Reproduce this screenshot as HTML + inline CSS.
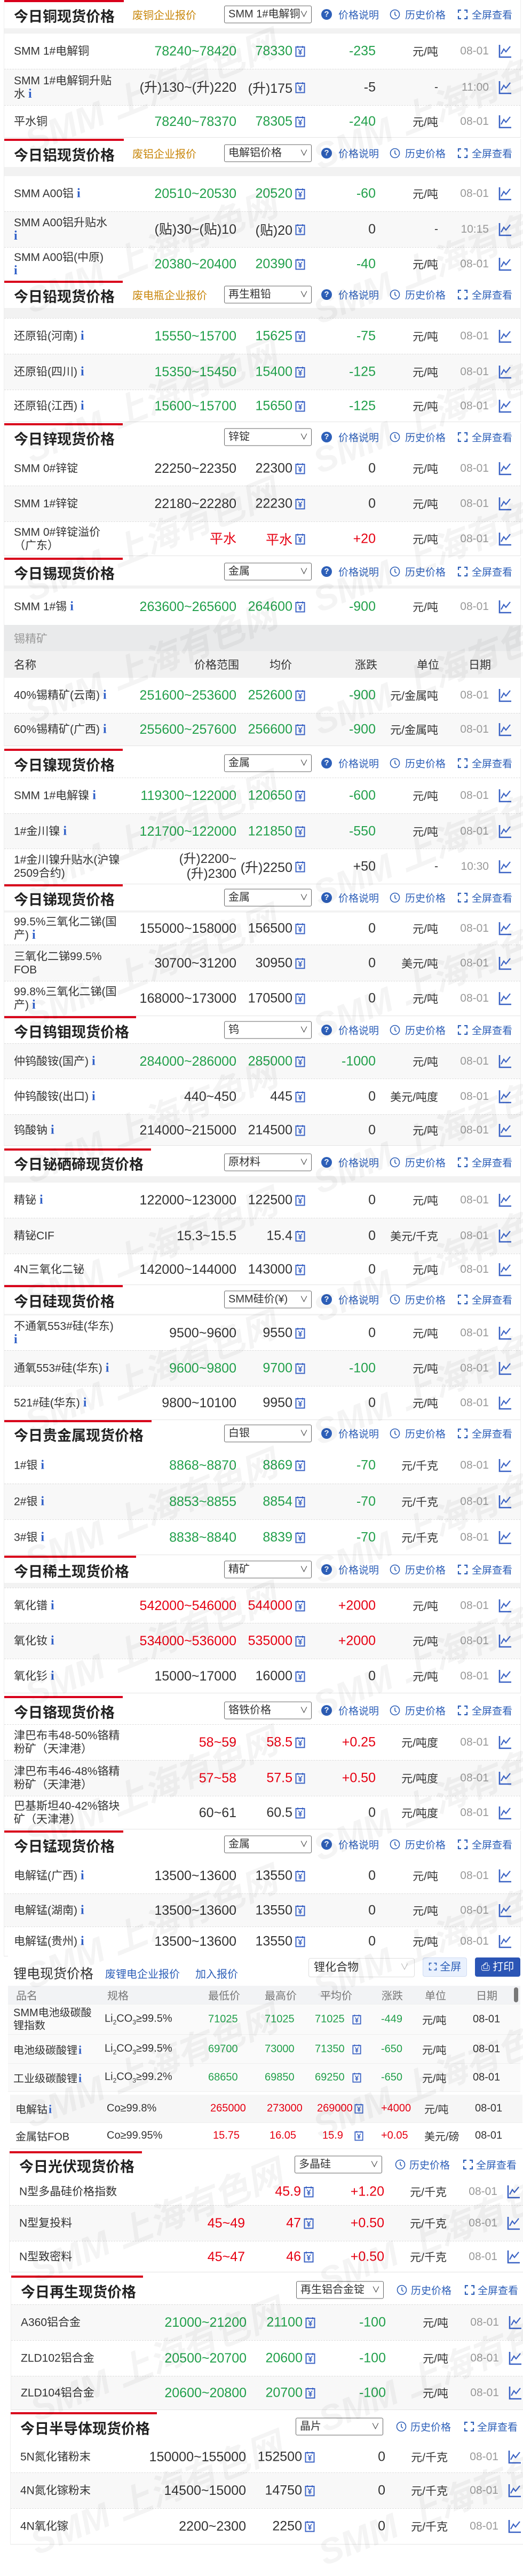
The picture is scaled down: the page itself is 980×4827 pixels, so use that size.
<!DOCTYPE html>
<html><head><meta charset="utf-8">
<style>
*{box-sizing:border-box}
body{margin:0;width:980px;height:4772px;position:relative;overflow:hidden;background:#fff;font-family:"Liberation Sans","Noto Sans CJK SC",sans-serif;color:#333}
.s{position:absolute;left:7px;width:969px;background:#fff;border-left:1px solid #eee;border-right:1px solid #eee;border-bottom:1px solid #e4e4e4}
.s.lo{left:17px;width:975px}
.rb{position:absolute;left:0;top:0;height:4px;background:#d9001b;z-index:2}
.h{position:relative;background:#fff}
.h>*{position:absolute;top:50%;transform:translateY(-50%);white-space:nowrap}
.t{left:18px;font-size:27px;font-weight:bold;color:#222;margin-top:2px}
.o{left:240px;font-size:20px;color:#c8860a}
.sel{left:412px;width:164px;height:33px;border:1px solid #666;border-radius:3px;font-size:20px;line-height:31px;padding-left:7px;color:#333;overflow:hidden;background:#fff}
.lo .sel{left:534px}
.sel b{position:absolute;right:6px;top:0;font-weight:normal;font-size:15px;color:#333}
.lk{font-size:19px;color:#2d5fb8}
.qi{left:594px;width:20px;height:20px;border-radius:50%;background:#2d5fb8;color:#fff;font-size:15px;font-weight:bold;text-align:center;line-height:20px}
.ck{left:722px;width:20px;height:20px}
.fs{left:849px;width:20px;height:20px}
.band{background:#f2f2f2}
.r{position:relative;border-top:1px dashed #ddd;background:#fff}
.r.a{background:#f8f8f8}
.r>*{position:absolute;top:50%;transform:translateY(-50%);white-space:nowrap}
.n{left:18px;font-size:21px;line-height:25px;color:#333}
.i{font-family:"Liberation Serif",serif;font-weight:bold;color:#3060c8;font-size:24px;margin-left:6px}
.rg{right:532px;font-size:25px;text-align:right;line-height:28px}
.av{right:427px;font-size:25px}
.y{right:403px;width:19px;height:22px}
.ch{right:271px;font-size:25px}
.u{right:154px;font-size:21px}
.d{right:59px;font-size:21px;color:#999}
.c{right:16px;width:25px;height:26px}
.g{color:#22a04b}.rd{color:#e60012}.k{color:#333}
.sub{background:#e9eaeb;position:relative;color:#999;font-size:21px}
.colh{background:#f1f1f1;position:relative;font-size:21px;color:#333}
.sub span,.colh span{position:absolute;top:50%;transform:translateY(-50%)}
.wm{position:absolute;font-size:66px;font-weight:bold;font-style:italic;color:rgba(0,0,0,0.045);transform:rotate(-22deg);white-space:nowrap;z-index:5;pointer-events:none}
.li{position:absolute;left:15px;top:3665px;width:960px;height:362px;background:#fff}
.li .lt{position:absolute;left:10px;top:14px;font-size:25px;color:#333}
.li .bl{position:absolute;top:18px;font-size:20px;color:#2d5fb8}
.lr{position:absolute;left:0;width:960px;border-bottom:1px solid #eee;background:#fafafa;font-size:20px}
.lr>*{position:absolute;top:50%;transform:translateY(-50%);white-space:nowrap}
</style></head><body>
<svg width="0" height="0" style="position:absolute">
<defs>
<symbol id="yen" viewBox="0 0 19 22"><rect x="1.5" y="3" width="16" height="17.5" fill="none" stroke="#3a62c4" stroke-width="2"/><path d="M5 1v4M14 1v4M6 7l3.5 4.5L13 7M9.5 11.5V18M6.5 12.5h6M6.5 15h6" fill="none" stroke="#3a62c4" stroke-width="1.6"/></symbol>
<symbol id="cht" viewBox="0 0 25 26"><path d="M2 1V24H24" fill="none" stroke="#3a62c4" stroke-width="2.6"/><path d="M5 18L10 9L14 14L22 4" fill="none" stroke="#3a62c4" stroke-width="2.2"/></symbol>
<symbol id="clk" viewBox="0 0 20 20"><circle cx="10" cy="10" r="8.5" fill="none" stroke="#2d5fb8" stroke-width="1.6"/><path d="M10 5v5.5l3 2.5" fill="none" stroke="#2d5fb8" stroke-width="1.6"/></symbol>
<symbol id="ful" viewBox="0 0 20 20"><path d="M2 7V2h5M13 2h5v5M18 13v5h-5M7 18H2v-5" fill="none" stroke="#2d5fb8" stroke-width="2.2"/></symbol>
</defs></svg>

<!-- 1 copper -->
<div class="s" style="top:0"><div class="rb" style="width:224px"></div>
<div class="h" style="height:53px"><span class="t">今日铜现货价格</span><span class="o">废铜企业报价</span><span class="sel">SMM 1#电解铜<b>∨</b></span><span class="qi">?</span><span class="lk" style="left:626px">价格说明</span><svg class="ck"><use href="#clk"/></svg><span class="lk" style="left:751px">历史价格</span><svg class="fs"><use href="#ful"/></svg><span class="lk" style="left:876px">全屏查看</span></div>
<div class="band" style="height:10px"></div>
<div class="r" style="height:66px;border-top:0"><span class="n">SMM 1#电解铜</span><span class="rg g">78240~78420</span><span class="av g">78330</span><svg class="y"><use href="#yen"/></svg><span class="ch g">-235</span><span class="u">元/吨</span><span class="d">08-01</span><svg class="c"><use href="#cht"/></svg></div>
<div class="r a" style="height:68px"><span class="n">SMM 1#电解铜升贴<br>水<span class="i">i</span></span><span class="rg k">(升)130~(升)220</span><span class="av k">(升)175</span><svg class="y"><use href="#yen"/></svg><span class="ch k">-5</span><span class="u">-</span><span class="d">11:00</span><svg class="c"><use href="#cht"/></svg></div>
<div class="r" style="height:60px"><span class="n">平水铜</span><span class="rg g">78240~78370</span><span class="av g">78305</span><svg class="y"><use href="#yen"/></svg><span class="ch g">-240</span><span class="u">元/吨</span><span class="d">08-01</span><svg class="c"><use href="#cht"/></svg></div>
</div>

<!-- 2 aluminium -->
<div class="s" style="top:260px"><div class="rb" style="width:224px"></div>
<div class="h" style="height:53px"><span class="t">今日铝现货价格</span><span class="o">废铝企业报价</span><span class="sel">电解铝价格<b>∨</b></span><span class="qi">?</span><span class="lk" style="left:626px">价格说明</span><svg class="ck"><use href="#clk"/></svg><span class="lk" style="left:751px">历史价格</span><svg class="fs"><use href="#ful"/></svg><span class="lk" style="left:876px">全屏查看</span></div>
<div class="band" style="height:17px"></div>
<div class="r" style="height:66px;border-top:0"><span class="n">SMM A00铝<span class="i">i</span></span><span class="rg g">20510~20530</span><span class="av g">20520</span><svg class="y"><use href="#yen"/></svg><span class="ch g">-60</span><span class="u">元/吨</span><span class="d">08-01</span><svg class="c"><use href="#cht"/></svg></div>
<div class="r a" style="height:67px"><span class="n">SMM A00铝升贴水<br><span class="i" style="margin:0">i</span></span><span class="rg k">(贴)30~(贴)10</span><span class="av k">(贴)20</span><svg class="y"><use href="#yen"/></svg><span class="ch k">0</span><span class="u">-</span><span class="d">10:15</span><svg class="c"><use href="#cht"/></svg></div>
<div class="r" style="height:63px"><span class="n">SMM A00铝(中原)<br><span class="i" style="margin:0">i</span></span><span class="rg g">20380~20400</span><span class="av g">20390</span><svg class="y"><use href="#yen"/></svg><span class="ch g">-40</span><span class="u">元/吨</span><span class="d">08-01</span><svg class="c"><use href="#cht"/></svg></div>
</div>

<!-- 3 lead -->
<div class="s" style="top:526px"><div class="rb" style="width:222px"></div>
<div class="h" style="height:51px"><span class="t">今日铅现货价格</span><span class="o">废电瓶企业报价</span><span class="sel">再生粗铅<b>∨</b></span><span class="qi">?</span><span class="lk" style="left:626px">价格说明</span><svg class="ck"><use href="#clk"/></svg><span class="lk" style="left:751px">历史价格</span><svg class="fs"><use href="#ful"/></svg><span class="lk" style="left:876px">全屏查看</span></div>
<div class="band" style="height:19px"></div>
<div class="r" style="height:67px"><span class="n">还原铅(河南)<span class="i">i</span></span><span class="rg g">15550~15700</span><span class="av g">15625</span><svg class="y"><use href="#yen"/></svg><span class="ch g">-75</span><span class="u">元/吨</span><span class="d">08-01</span><svg class="c"><use href="#cht"/></svg></div>
<div class="r a" style="height:67px"><span class="n">还原铅(四川)<span class="i">i</span></span><span class="rg g">15350~15450</span><span class="av g">15400</span><svg class="y"><use href="#yen"/></svg><span class="ch g">-125</span><span class="u">元/吨</span><span class="d">08-01</span><svg class="c"><use href="#cht"/></svg></div>
<div class="r" style="height:60px"><span class="n">还原铅(江西)<span class="i">i</span></span><span class="rg g">15600~15700</span><span class="av g">15650</span><svg class="y"><use href="#yen"/></svg><span class="ch g">-125</span><span class="u">元/吨</span><span class="d">08-01</span><svg class="c"><use href="#cht"/></svg></div>
</div>

<!-- 4 zinc -->
<div class="s" style="top:793px"><div class="rb" style="width:222px"></div>
<div class="h" style="height:52px"><span class="t">今日锌现货价格</span><span class="sel">锌锭<b>∨</b></span><span class="qi">?</span><span class="lk" style="left:626px">价格说明</span><svg class="ck"><use href="#clk"/></svg><span class="lk" style="left:751px">历史价格</span><svg class="fs"><use href="#ful"/></svg><span class="lk" style="left:876px">全屏查看</span></div>
<div class="r" style="height:65px;border-top:0"><span class="n">SMM 0#锌锭</span><span class="rg k">22250~22350</span><span class="av k">22300</span><svg class="y"><use href="#yen"/></svg><span class="ch k">0</span><span class="u">元/吨</span><span class="d">08-01</span><svg class="c"><use href="#cht"/></svg></div>
<div class="r a" style="height:67px"><span class="n">SMM 1#锌锭</span><span class="rg k">22180~22280</span><span class="av k">22230</span><svg class="y"><use href="#yen"/></svg><span class="ch k">0</span><span class="u">元/吨</span><span class="d">08-01</span><svg class="c"><use href="#cht"/></svg></div>
<div class="r" style="height:64px"><span class="n">SMM 0#锌锭溢价<br>（广东）</span><span class="rg rd">平水</span><span class="av rd">平水</span><svg class="y"><use href="#yen"/></svg><span class="ch rd">+20</span><span class="u">元/吨</span><span class="d">08-01</span><svg class="c"><use href="#cht"/></svg></div>
</div>

<!-- 5 tin -->
<div class="s" style="top:1045px"><div class="rb" style="width:222px"></div>
<div class="h" style="height:52px"><span class="t">今日锡现货价格</span><span class="sel">金属<b>∨</b></span><span class="qi">?</span><span class="lk" style="left:626px">价格说明</span><svg class="ck"><use href="#clk"/></svg><span class="lk" style="left:751px">历史价格</span><svg class="fs"><use href="#ful"/></svg><span class="lk" style="left:876px">全屏查看</span></div>
<div class="band" style="height:6px"></div>
<div class="r" style="height:68px;border-top:0"><span class="n">SMM 1#锡<span class="i">i</span></span><span class="rg g">263600~265600</span><span class="av g">264600</span><svg class="y"><use href="#yen"/></svg><span class="ch g">-900</span><span class="u">元/吨</span><span class="d">08-01</span><svg class="c"><use href="#cht"/></svg></div>
<div class="sub" style="height:49px"><span style="left:18px">锡精矿</span></div>
<div class="colh" style="height:50px"><span style="left:18px">名称</span><span style="left:356px">价格范围</span><span style="left:497px">均价</span><span style="left:657px">涨跌</span><span style="left:773px">单位</span><span style="left:870px">日期</span></div>
<div class="r" style="height:66px;border-top:0"><span class="n">40%锡精矿(云南)<span class="i">i</span></span><span class="rg g">251600~253600</span><span class="av g">252600</span><svg class="y"><use href="#yen"/></svg><span class="ch g">-900</span><span class="u">元/金属吨</span><span class="d">08-01</span><svg class="c"><use href="#cht"/></svg></div>
<div class="r a" style="height:61px"><span class="n">60%锡精矿(广西)<span class="i">i</span></span><span class="rg g">255600~257600</span><span class="av g">256600</span><svg class="y"><use href="#yen"/></svg><span class="ch g">-900</span><span class="u">元/金属吨</span><span class="d">08-01</span><svg class="c"><use href="#cht"/></svg></div>
</div>

<!-- 6 nickel -->
<div class="s" style="top:1403px"><div class="rb" style="width:222px"></div>
<div class="h" style="height:54px"><span class="t">今日镍现货价格</span><span class="sel">金属<b>∨</b></span><span class="qi">?</span><span class="lk" style="left:626px">价格说明</span><svg class="ck"><use href="#clk"/></svg><span class="lk" style="left:751px">历史价格</span><svg class="fs"><use href="#ful"/></svg><span class="lk" style="left:876px">全屏查看</span></div>
<div class="r" style="height:67px"><span class="n">SMM 1#电解镍<span class="i">i</span></span><span class="rg g">119300~122000</span><span class="av g">120650</span><svg class="y"><use href="#yen"/></svg><span class="ch g">-600</span><span class="u">元/吨</span><span class="d">08-01</span><svg class="c"><use href="#cht"/></svg></div>
<div class="r a" style="height:66px"><span class="n">1#金川镍<span class="i">i</span></span><span class="rg g">121700~122000</span><span class="av g">121850</span><svg class="y"><use href="#yen"/></svg><span class="ch g">-550</span><span class="u">元/吨</span><span class="d">08-01</span><svg class="c"><use href="#cht"/></svg></div>
<div class="r" style="height:66px"><span class="n">1#金川镍升贴水(沪镍<br>2509合约)</span><span class="rg k" style="font-size:24px">(升)2200~<br>(升)2300</span><span class="av k">(升)2250</span><svg class="y"><use href="#yen"/></svg><span class="ch k">+50</span><span class="u">-</span><span class="d">10:30</span><svg class="c"><use href="#cht"/></svg></div>
</div>

<!-- 7 antimony -->
<div class="s" style="top:1657px"><div class="rb" style="width:222px"></div>
<div class="h" style="height:49px"><span class="t">今日锑现货价格</span><span class="sel">金属<b>∨</b></span><span class="qi">?</span><span class="lk" style="left:626px">价格说明</span><svg class="ck"><use href="#clk"/></svg><span class="lk" style="left:751px">历史价格</span><svg class="fs"><use href="#ful"/></svg><span class="lk" style="left:876px">全屏查看</span></div>
<div class="band" style="height:4px"></div>
<div class="r" style="height:60px;border-top:0"><span class="n">99.5%三氧化二锑(国<br>产)<span class="i">i</span></span><span class="rg k">155000~158000</span><span class="av k">156500</span><svg class="y"><use href="#yen"/></svg><span class="ch k">0</span><span class="u">元/吨</span><span class="d">08-01</span><svg class="c"><use href="#cht"/></svg></div>
<div class="r a" style="height:68px"><span class="n">三氧化二锑99.5%<br>FOB</span><span class="rg k">30700~31200</span><span class="av k">30950</span><svg class="y"><use href="#yen"/></svg><span class="ch k">0</span><span class="u">美元/吨</span><span class="d">08-01</span><svg class="c"><use href="#cht"/></svg></div>
<div class="r" style="height:65px"><span class="n">99.8%三氧化二锑(国<br>产)<span class="i">i</span></span><span class="rg k">168000~173000</span><span class="av k">170500</span><svg class="y"><use href="#yen"/></svg><span class="ch k">0</span><span class="u">元/吨</span><span class="d">08-01</span><svg class="c"><use href="#cht"/></svg></div>
</div>

<!-- 8 tungsten -->
<div class="s" style="top:1904px"><div class="rb" style="width:247px"></div>
<div class="h" style="height:51px"><span class="t">今日钨钼现货价格</span><span class="sel">钨<b>∨</b></span><span class="qi">?</span><span class="lk" style="left:626px">价格说明</span><svg class="ck"><use href="#clk"/></svg><span class="lk" style="left:751px">历史价格</span><svg class="fs"><use href="#ful"/></svg><span class="lk" style="left:876px">全屏查看</span></div>
<div class="r a" style="height:66px"><span class="n">仲钨酸铵(国产)<span class="i">i</span></span><span class="rg g">284000~286000</span><span class="av g">285000</span><svg class="y"><use href="#yen"/></svg><span class="ch g">-1000</span><span class="u">元/吨</span><span class="d">08-01</span><svg class="c"><use href="#cht"/></svg></div>
<div class="r" style="height:67px"><span class="n">仲钨酸铵(出口)<span class="i">i</span></span><span class="rg k">440~450</span><span class="av k">445</span><svg class="y"><use href="#yen"/></svg><span class="ch k">0</span><span class="u">美元/吨度</span><span class="d">08-01</span><svg class="c"><use href="#cht"/></svg></div>
<div class="r a" style="height:58px"><span class="n">钨酸钠<span class="i">i</span></span><span class="rg k">214000~215000</span><span class="av k">214500</span><svg class="y"><use href="#yen"/></svg><span class="ch k">0</span><span class="u">元/吨</span><span class="d">08-01</span><svg class="c"><use href="#cht"/></svg></div>
</div>

<!-- 9 Bi Se Te -->
<div class="s" style="top:2152px"><div class="rb" style="width:275px"></div>
<div class="h" style="height:52px"><span class="t">今日铋硒碲现货价格</span><span class="sel">原材料<b>∨</b></span><span class="qi">?</span><span class="lk" style="left:626px">价格说明</span><svg class="ck"><use href="#clk"/></svg><span class="lk" style="left:751px">历史价格</span><svg class="fs"><use href="#ful"/></svg><span class="lk" style="left:876px">全屏查看</span></div>
<div class="band" style="height:12px"></div>
<div class="r" style="height:66px;border-top:0"><span class="n">精铋<span class="i">i</span></span><span class="rg k">122000~123000</span><span class="av k">122500</span><svg class="y"><use href="#yen"/></svg><span class="ch k">0</span><span class="u">元/吨</span><span class="d">08-01</span><svg class="c"><use href="#cht"/></svg></div>
<div class="r a" style="height:67px"><span class="n">精铋CIF</span><span class="rg k">15.3~15.5</span><span class="av k">15.4</span><svg class="y"><use href="#yen"/></svg><span class="ch k">0</span><span class="u">美元/千克</span><span class="d">08-01</span><svg class="c"><use href="#cht"/></svg></div>
<div class="r" style="height:58px"><span class="n">4N三氧化二铋</span><span class="rg k">142000~144000</span><span class="av k">143000</span><svg class="y"><use href="#yen"/></svg><span class="ch k">0</span><span class="u">元/吨</span><span class="d">08-01</span><svg class="c"><use href="#cht"/></svg></div>
</div>

<!-- 10 silicon -->
<div class="s" style="top:2408px"><div class="rb" style="width:222px"></div>
<div class="h" style="height:54px"><span class="t">今日硅现货价格</span><span class="sel">SMM硅价(¥)<b>∨</b></span><span class="qi">?</span><span class="lk" style="left:626px">价格说明</span><svg class="ck"><use href="#clk"/></svg><span class="lk" style="left:751px">历史价格</span><svg class="fs"><use href="#ful"/></svg><span class="lk" style="left:876px">全屏查看</span></div>
<div class="band" style="height:3px"></div>
<div class="r" style="height:65px;border-top:0"><span class="n">不通氧553#硅(华东)<br><span class="i" style="margin:0">i</span></span><span class="rg k">9500~9600</span><span class="av k">9550</span><svg class="y"><use href="#yen"/></svg><span class="ch k">0</span><span class="u">元/吨</span><span class="d">08-01</span><svg class="c"><use href="#cht"/></svg></div>
<div class="r a" style="height:67px"><span class="n">通氧553#硅(华东)<span class="i">i</span></span><span class="rg g">9600~9800</span><span class="av g">9700</span><svg class="y"><use href="#yen"/></svg><span class="ch g">-100</span><span class="u">元/吨</span><span class="d">08-01</span><svg class="c"><use href="#cht"/></svg></div>
<div class="r" style="height:63px"><span class="n">521#硅(华东)<span class="i">i</span></span><span class="rg k">9800~10100</span><span class="av k">9950</span><svg class="y"><use href="#yen"/></svg><span class="ch k">0</span><span class="u">元/吨</span><span class="d">08-01</span><svg class="c"><use href="#cht"/></svg></div>
</div>

<!-- 11 precious -->
<div class="s" style="top:2661px"><div class="rb" style="width:276px"></div>
<div class="h" style="height:50px"><span class="t">今日贵金属现货价格</span><span class="sel">白银<b>∨</b></span><span class="qi">?</span><span class="lk" style="left:626px">价格说明</span><svg class="ck"><use href="#clk"/></svg><span class="lk" style="left:751px">历史价格</span><svg class="fs"><use href="#ful"/></svg><span class="lk" style="left:876px">全屏查看</span></div>
<div class="r" style="height:69px;border-top:0"><span class="n">1#银<span class="i">i</span></span><span class="rg g">8868~8870</span><span class="av g">8869</span><svg class="y"><use href="#yen"/></svg><span class="ch g">-70</span><span class="u">元/千克</span><span class="d">08-01</span><svg class="c"><use href="#cht"/></svg></div>
<div class="r a" style="height:67px"><span class="n">2#银<span class="i">i</span></span><span class="rg g">8853~8855</span><span class="av g">8854</span><svg class="y"><use href="#yen"/></svg><span class="ch g">-70</span><span class="u">元/千克</span><span class="d">08-01</span><svg class="c"><use href="#cht"/></svg></div>
<div class="r" style="height:66px"><span class="n">3#银<span class="i">i</span></span><span class="rg g">8838~8840</span><span class="av g">8839</span><svg class="y"><use href="#yen"/></svg><span class="ch g">-70</span><span class="u">元/千克</span><span class="d">08-01</span><svg class="c"><use href="#cht"/></svg></div>
</div>

<!-- 12 rare earth -->
<div class="s" style="top:2915px"><div class="rb" style="width:247px"></div>
<div class="h" style="height:51px"><span class="t">今日稀土现货价格</span><span class="sel">精矿<b>∨</b></span><span class="qi">?</span><span class="lk" style="left:626px">价格说明</span><svg class="ck"><use href="#clk"/></svg><span class="lk" style="left:751px">历史价格</span><svg class="fs"><use href="#ful"/></svg><span class="lk" style="left:876px">全屏查看</span></div>
<div class="band" style="height:9px"></div>
<div class="r" style="height:66px"><span class="n">氧化镨<span class="i">i</span></span><span class="rg rd">542000~546000</span><span class="av rd">544000</span><svg class="y"><use href="#yen"/></svg><span class="ch rd">+2000</span><span class="u">元/吨</span><span class="d">08-01</span><svg class="c"><use href="#cht"/></svg></div>
<div class="r a" style="height:67px"><span class="n">氧化钕<span class="i">i</span></span><span class="rg rd">534000~536000</span><span class="av rd">535000</span><svg class="y"><use href="#yen"/></svg><span class="ch rd">+2000</span><span class="u">元/吨</span><span class="d">08-01</span><svg class="c"><use href="#cht"/></svg></div>
<div class="r" style="height:64px"><span class="n">氧化钐<span class="i">i</span></span><span class="rg k">15000~17000</span><span class="av k">16000</span><svg class="y"><use href="#yen"/></svg><span class="ch k">0</span><span class="u">元/吨</span><span class="d">08-01</span><svg class="c"><use href="#cht"/></svg></div>
</div>

<!-- 13 chromium -->
<div class="s" style="top:3178px"><div class="rb" style="width:222px"></div>
<div class="h" style="height:53px"><span class="t">今日铬现货价格</span><span class="sel">铬铁价格<b>∨</b></span><span class="qi">?</span><span class="lk" style="left:626px">价格说明</span><svg class="ck"><use href="#clk"/></svg><span class="lk" style="left:751px">历史价格</span><svg class="fs"><use href="#ful"/></svg><span class="lk" style="left:876px">全屏查看</span></div>
<div class="r" style="height:67px"><span class="n">津巴布韦48-50%铬精<br>粉矿（天津港）</span><span class="rg rd">58~59</span><span class="av rd">58.5</span><svg class="y"><use href="#yen"/></svg><span class="ch rd">+0.25</span><span class="u">元/吨度</span><span class="d">08-01</span><svg class="c"><use href="#cht"/></svg></div>
<div class="r a" style="height:67px"><span class="n">津巴布韦46-48%铬精<br>粉矿（天津港）</span><span class="rg rd">57~58</span><span class="av rd">57.5</span><svg class="y"><use href="#yen"/></svg><span class="ch rd">+0.50</span><span class="u">元/吨度</span><span class="d">08-01</span><svg class="c"><use href="#cht"/></svg></div>
<div class="r" style="height:62px"><span class="n">巴基斯坦40-42%铬块<br>矿（天津港）</span><span class="rg k">60~61</span><span class="av k">60.5</span><svg class="y"><use href="#yen"/></svg><span class="ch k">0</span><span class="u">元/吨度</span><span class="d">08-01</span><svg class="c"><use href="#cht"/></svg></div>
</div>

<!-- 14 manganese -->
<div class="s" style="top:3430px"><div class="rb" style="width:223px"></div>
<div class="h" style="height:51px"><span class="t">今日锰现货价格</span><span class="sel">金属<b>∨</b></span><span class="qi">?</span><span class="lk" style="left:626px">价格说明</span><svg class="ck"><use href="#clk"/></svg><span class="lk" style="left:751px">历史价格</span><svg class="fs"><use href="#ful"/></svg><span class="lk" style="left:876px">全屏查看</span></div>
<div class="r" style="height:67px;border-top:0"><span class="n">电解锰(广西)<span class="i">i</span></span><span class="rg k">13500~13600</span><span class="av k">13550</span><svg class="y"><use href="#yen"/></svg><span class="ch k">0</span><span class="u">元/吨</span><span class="d">08-01</span><svg class="c"><use href="#cht"/></svg></div>
<div class="r a" style="height:62px"><span class="n">电解锰(湖南)<span class="i">i</span></span><span class="rg k">13500~13600</span><span class="av k">13550</span><svg class="y"><use href="#yen"/></svg><span class="ch k">0</span><span class="u">元/吨</span><span class="d">08-01</span><svg class="c"><use href="#cht"/></svg></div>
<div class="r" style="height:55px"><span class="n">电解锰(贵州)<span class="i">i</span></span><span class="rg k">13500~13600</span><span class="av k">13550</span><svg class="y"><use href="#yen"/></svg><span class="ch k">0</span><span class="u">元/吨</span><span class="d">08-01</span><svg class="c"><use href="#cht"/></svg></div>
</div>

<!-- 15 lithium -->
<div class="li">
<span class="lt">锂电现货价格</span><span class="bl" style="left:182px">废锂电企业报价</span><span class="bl" style="left:351px">加入报价</span>
<div style="position:absolute;left:563px;top:4px;width:199px;height:36px;border:1px solid #ddd;border-radius:4px;font-size:21px;line-height:34px;padding-left:9px;color:#333">锂化合物<span style="position:absolute;right:10px;color:#bbb;font-size:16px">∨</span></div>
<div style="position:absolute;left:777px;top:3px;width:83px;height:36px;border:1px solid #cfdcf3;background:#eaf1fd;border-radius:4px;font-size:20px;line-height:34px;color:#2d5fb8;text-align:center"><svg width="16" height="16" style="vertical-align:-1px"><use href="#ful"/></svg> 全屏</div>
<div style="position:absolute;left:875px;top:3px;width:85px;height:36px;background:#2b55b5;border-radius:4px;font-size:20px;line-height:36px;color:#fff;text-align:center">⎙ 打印</div>
<div class="lr" style="top:56px;height:35px;background:#f2f3f5;color:#777"><span style="left:15px">品名</span><span style="left:186px">规格</span><span style="left:375px">最低价</span><span style="left:481px">最高价</span><span style="left:585px">平均价</span><span style="left:700px">涨跌</span><span style="left:781px">单位</span><span style="left:877px">日期</span><span style="left:948px;width:8px;height:28px;background:#777;border-radius:4px"></span></div>
<div class="lr" style="top:91px;height:57px"><span style="left:10px;line-height:24px">SMM电池级碳酸<br>锂指数</span><span style="left:181px">Li<sub style="font-size:12px">2</sub>CO<sub style="font-size:12px">3</sub>≥99.5%</span><span class="g" style="left:375px">71025</span><span class="g" style="left:481px">71025</span><span class="g" style="left:575px">71025</span><svg style="left:645px;width:17px;height:20px"><use href="#yen"/></svg><span class="g" style="left:699px">-449</span><span style="left:776px">元/吨</span><span style="left:871px">08-01</span></div>
<div class="lr" style="top:148px;height:54px"><span style="left:10px">电池级碳酸锂<span class="i" style="font-size:22px;margin-left:2px">i</span></span><span style="left:181px">Li<sub style="font-size:12px">2</sub>CO<sub style="font-size:12px">3</sub>≥99.5%</span><span class="g" style="left:375px">69700</span><span class="g" style="left:481px">73000</span><span class="g" style="left:575px">71350</span><svg style="left:645px;width:17px;height:20px"><use href="#yen"/></svg><span class="g" style="left:699px">-650</span><span style="left:776px">元/吨</span><span style="left:871px">08-01</span></div>
<div class="lr" style="top:202px;height:53px"><span style="left:10px">工业级碳酸锂<span class="i" style="font-size:22px;margin-left:2px">i</span></span><span style="left:181px">Li<sub style="font-size:12px">2</sub>CO<sub style="font-size:12px">3</sub>≥99.2%</span><span class="g" style="left:375px">68650</span><span class="g" style="left:481px">69850</span><span class="g" style="left:575px">69250</span><svg style="left:645px;width:17px;height:20px"><use href="#yen"/></svg><span class="g" style="left:699px">-650</span><span style="left:776px">元/吨</span><span style="left:871px">08-01</span></div>
<div class="lr" style="top:260px;left:4px;height:53px;background:#f6f6f6"><span style="left:10px">电解钴<span class="i" style="font-size:22px;margin-left:2px">i</span></span><span style="left:181px">Co≥99.8%</span><span class="rd" style="left:375px">265000</span><span class="rd" style="left:481px">273000</span><span class="rd" style="left:575px">269000</span><svg style="left:645px;width:17px;height:20px"><use href="#yen"/></svg><span class="rd" style="left:695px">+4000</span><span style="left:776px">元/吨</span><span style="left:871px">08-01</span></div>
<div class="lr" style="top:313px;left:4px;height:49px;background:#fff"><span style="left:10px">金属钴FOB</span><span style="left:181px">Co≥99.95%</span><span class="rd" style="left:380px">15.75</span><span class="rd" style="left:486px">16.05</span><span class="rd" style="left:585px">15.9</span><svg style="left:645px;width:17px;height:20px"><use href="#yen"/></svg><span class="rd" style="left:695px">+0.05</span><span style="left:776px">美元/磅</span><span style="left:871px">08-01</span></div>
</div>

<!-- 16 PV -->
<div class="s lo" style="top:4031px"><div class="rb" style="width:248px"></div>
<div class="h" style="height:50px"><span class="t">今日光伏现货价格</span><span class="sel">多晶硅<b>∨</b></span><svg class="ck"><use href="#clk"/></svg><span class="lk" style="left:749px">历史价格</span><svg class="fs"><use href="#ful"/></svg><span class="lk" style="left:874px">全屏查看</span></div>
<div class="r" style="height:51px;border-top:0"><span class="n">N型多晶硅价格指数</span><span class="av rd">45.9</span><svg class="y"><use href="#yen"/></svg><span class="ch rd">+1.20</span><span class="u">元/千克</span><span class="d">08-01</span><svg class="c"><use href="#cht"/></svg></div>
<div class="r a" style="height:67px"><span class="n">N型复投料</span><span class="rg rd">45~49</span><span class="av rd">47</span><svg class="y"><use href="#yen"/></svg><span class="ch rd">+0.50</span><span class="u">元/千克</span><span class="d">08-01</span><svg class="c"><use href="#cht"/></svg></div>
<div class="r" style="height:58px"><span class="n">N型致密料</span><span class="rg rd">45~47</span><span class="av rd">46</span><svg class="y"><use href="#yen"/></svg><span class="ch rd">+0.50</span><span class="u">元/千克</span><span class="d">08-01</span><svg class="c"><use href="#cht"/></svg></div>
</div>

<!-- 17 recycled -->
<div class="s lo" style="top:4264px;left:20px"><div class="rb" style="width:247px"></div>
<div class="h" style="height:54px"><span class="t">今日再生现货价格</span><span class="sel">再生铝合金锭<b>∨</b></span><svg class="ck"><use href="#clk"/></svg><span class="lk" style="left:749px">历史价格</span><svg class="fs"><use href="#ful"/></svg><span class="lk" style="left:874px">全屏查看</span></div>
<div class="r a" style="height:67px"><span class="n">A360铝合金</span><span class="rg g">21000~21200</span><span class="av g">21100</span><svg class="y"><use href="#yen"/></svg><span class="ch g">-100</span><span class="u">元/吨</span><span class="d">08-01</span><svg class="c"><use href="#cht"/></svg></div>
<div class="r" style="height:67px"><span class="n">ZLD102铝合金</span><span class="rg g">20500~20700</span><span class="av g">20600</span><svg class="y"><use href="#yen"/></svg><span class="ch g">-100</span><span class="u">元/吨</span><span class="d">08-01</span><svg class="c"><use href="#cht"/></svg></div>
<div class="r a" style="height:63px"><span class="n">ZLD104铝合金</span><span class="rg g">20600~20800</span><span class="av g">20700</span><svg class="y"><use href="#yen"/></svg><span class="ch g">-100</span><span class="u">元/吨</span><span class="d">08-01</span><svg class="c"><use href="#cht"/></svg></div>
</div>

<!-- 18 semiconductor -->
<div class="s lo" style="top:4520px;left:19px"><div class="rb" style="width:274px"></div>
<div class="h" style="height:54px"><span class="t">今日半导体现货价格</span><span class="sel">晶片<b>∨</b></span><svg class="ck"><use href="#clk"/></svg><span class="lk" style="left:749px">历史价格</span><svg class="fs"><use href="#ful"/></svg><span class="lk" style="left:874px">全屏查看</span></div>
<div class="r" style="height:59px;border-top:0"><span class="n">5N氮化锗粉末</span><span class="rg k">150000~155000</span><span class="av k">152500</span><svg class="y"><use href="#yen"/></svg><span class="ch k">0</span><span class="u">元/千克</span><span class="d">08-01</span><svg class="c"><use href="#cht"/></svg></div>
<div class="r a" style="height:67px"><span class="n">4N氮化镓粉末</span><span class="rg k">14500~15000</span><span class="av k">14750</span><svg class="y"><use href="#yen"/></svg><span class="ch k">0</span><span class="u">元/千克</span><span class="d">08-01</span><svg class="c"><use href="#cht"/></svg></div>
<div class="r" style="height:67px"><span class="n">4N氧化镓</span><span class="rg k">2200~2300</span><span class="av k">2250</span><svg class="y"><use href="#yen"/></svg><span class="ch k">0</span><span class="u">元/千克</span><span class="d">08-01</span><svg class="c"><use href="#cht"/></svg></div>
</div>

<!-- watermarks -->
<div class="wm" style="left:30px;top:120px">SMM 上海有色网</div><div class="wm" style="left:570px;top:150px">SMM 上海有色网</div>
<div class="wm" style="left:30px;top:420px">SMM 上海有色网</div><div class="wm" style="left:570px;top:440px">SMM 上海有色网</div>
<div class="wm" style="left:30px;top:700px">SMM 上海有色网</div><div class="wm" style="left:570px;top:720px">SMM 上海有色网</div>
<div class="wm" style="left:30px;top:960px">SMM 上海有色网</div><div class="wm" style="left:570px;top:980px">SMM 上海有色网</div>
<div class="wm" style="left:30px;top:1190px">SMM 上海有色网</div><div class="wm" style="left:570px;top:1210px">SMM 上海有色网</div>
<div class="wm" style="left:30px;top:1510px">SMM 上海有色网</div><div class="wm" style="left:570px;top:1530px">SMM 上海有色网</div>
<div class="wm" style="left:30px;top:1760px">SMM 上海有色网</div><div class="wm" style="left:570px;top:1780px">SMM 上海有色网</div>
<div class="wm" style="left:30px;top:2050px">SMM 上海有色网</div><div class="wm" style="left:570px;top:2070px">SMM 上海有色网</div>
<div class="wm" style="left:30px;top:2290px">SMM 上海有色网</div><div class="wm" style="left:570px;top:2310px">SMM 上海有色网</div>
<div class="wm" style="left:30px;top:2520px">SMM 上海有色网</div><div class="wm" style="left:570px;top:2540px">SMM 上海有色网</div>
<div class="wm" style="left:30px;top:2780px">SMM 上海有色网</div><div class="wm" style="left:570px;top:2800px">SMM 上海有色网</div>
<div class="wm" style="left:30px;top:3030px">SMM 上海有色网</div><div class="wm" style="left:570px;top:3050px">SMM 上海有色网</div>
<div class="wm" style="left:30px;top:3300px">SMM 上海有色网</div><div class="wm" style="left:570px;top:3320px">SMM 上海有色网</div>
<div class="wm" style="left:30px;top:3560px">SMM 上海有色网</div><div class="wm" style="left:570px;top:3580px">SMM 上海有色网</div>
<div class="wm" style="left:30px;top:3820px">SMM 上海有色网</div><div class="wm" style="left:570px;top:3840px">SMM 上海有色网</div>
<div class="wm" style="left:40px;top:4110px">SMM 上海有色网</div><div class="wm" style="left:580px;top:4130px">SMM 上海有色网</div>
<div class="wm" style="left:40px;top:4370px">SMM 上海有色网</div><div class="wm" style="left:580px;top:4390px">SMM 上海有色网</div>
<div class="wm" style="left:40px;top:4620px">SMM 上海有色网</div><div class="wm" style="left:580px;top:4640px">SMM 上海有色网</div>
</body></html>
